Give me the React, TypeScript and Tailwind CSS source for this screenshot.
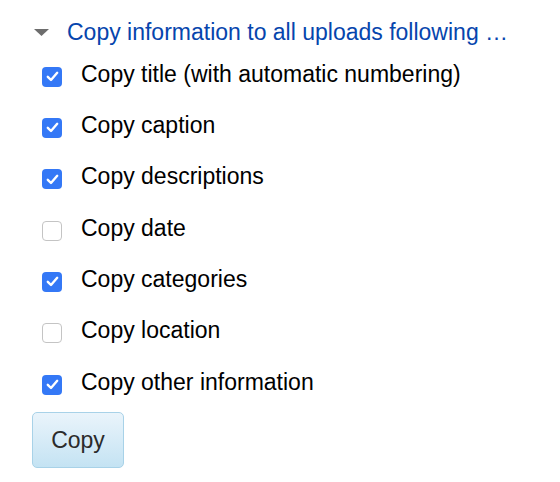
import { useState } from 'react';

const items = [
  { label: 'Copy title (with automatic numbering)', checked: true },
  { label: 'Copy caption', checked: true },
  { label: 'Copy descriptions', checked: true },
  { label: 'Copy date', checked: false },
  { label: 'Copy categories', checked: true },
  { label: 'Copy location', checked: false },
  { label: 'Copy other information', checked: true },
];

export default function App() {
  const [state, setState] = useState(items.map((i) => i.checked));

  return (
    <div className="w-[560px] h-[482px] bg-white font-['Liberation_Sans',Arial,sans-serif] text-[23px] text-black">
      <div className="flex items-center h-[24px] mt-[20px] pl-[34px]">
        <svg width="15" height="7" viewBox="0 0 15 7" className="shrink-0">
          <path d="M0 0 H15 L7.5 7 Z" fill="#6d6d6d" />
        </svg>
        <span className="ml-[18px] text-[#0645ad] leading-none">Copy information to all uploads following …</span>
      </div>
      <div className="mt-[7px] flex flex-col">
        {items.map((item, i) => (
          <label key={item.label} className="flex items-center h-[51.33px] pl-[42px]">
            <span
              onClick={() => setState((s) => s.map((v, j) => (j === i ? !v : v)))}
              className={
                state[i]
                  ? 'flex items-center justify-center w-[20px] h-[20px] rounded-[4px] bg-[#3478f6]'
                  : 'w-[20px] h-[20px] rounded-[4px] border border-[#c4c4c4] bg-white'
              }
            >
              {state[i] && (
                <svg width="13" height="11" viewBox="0 0 13 11">
                  <path d="M1.8 5.8 L5 9 L11.2 1.8" fill="none" stroke="white" strokeWidth="2.4" strokeLinecap="round" strokeLinejoin="round" />
                </svg>
              )}
            </span>
            <span className="ml-[19px] mb-[5px] leading-none">{item.label}</span>
          </label>
        ))}
      </div>
      <button className="ml-[32px] mt-[2px] w-[92px] h-[56px] rounded-[5px] border border-[#a8d2e8] bg-gradient-to-b from-[#eaf4fb] to-[#c4e3f3] text-[23px] text-[#2b2b2b]">
        Copy
      </button>
    </div>
  );
}
